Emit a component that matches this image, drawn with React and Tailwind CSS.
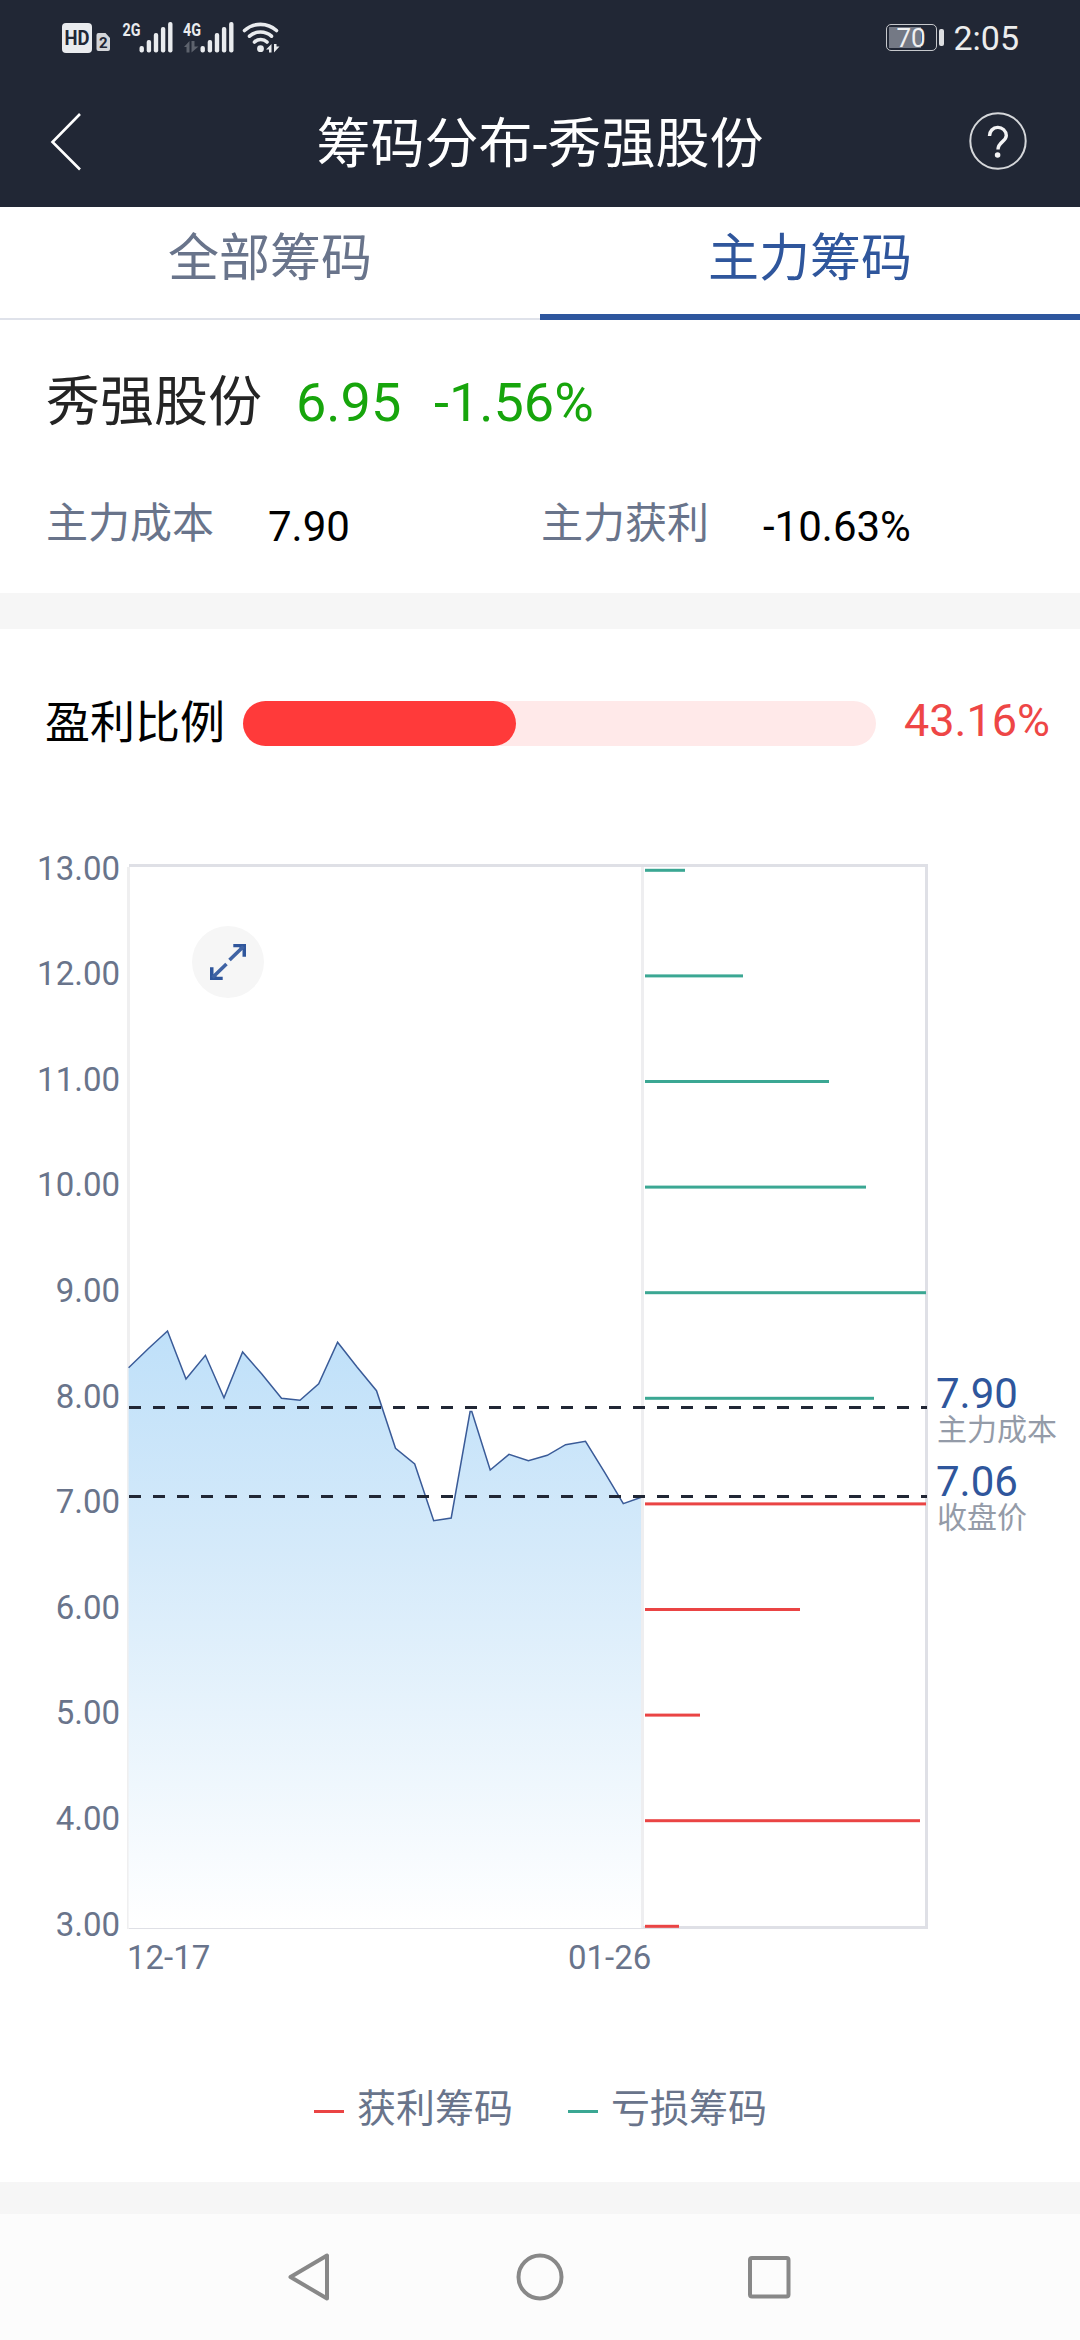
const LEVELS = [
  { label: "13.00", end: 685, gain: false },
  { label: "12.00", end: 743, gain: false },
  { label: "11.00", end: 829, gain: false },
  { label: "10.00", end: 866, gain: false },
  { label: "9.00", end: 926, gain: false },
  { label: "8.00", end: 874, gain: false },
  { label: "7.00", end: 926, gain: true },
  { label: "6.00", end: 800, gain: true },
  { label: "5.00", end: 700, gain: true },
  { label: "4.00", end: 920, gain: true },
  { label: "3.00", end: 679, gain: true },
];

const PRICE =
  "128.6,1367.7 148.2,1348.7 167.5,1331 186,1379 205.4,1355.3 224,1397.7 242.6,1352 261.8,1374 281.5,1398.3 300,1400.3 318.7,1383.7 337.6,1342.3 357,1367 376.5,1390.7 395.5,1448.3 414.7,1464 433.7,1520.7 451.2,1518 470.1,1411.5 471.8,1411.5 490.2,1470 509,1454.3 528.4,1460.7 547.3,1455.3 565.6,1444.7 585.5,1441.3 604.8,1472.7 623.3,1503.7 642,1497";

function Bars({ x }) {
  return (
    <g fill="#e9ebee">
      <rect x={x} y="46" width="4.4" height="6.4" rx="2" />
      <rect x={x + 7.2} y="40" width="4.4" height="12.4" rx="2" />
      <rect x={x + 14.3} y="33" width="4.4" height="19.4" rx="2" />
      <rect x={x + 21.4} y="27" width="4.4" height="25.4" rx="2" />
      <rect x={x + 28.6} y="22" width="4.4" height="30.4" rx="2" />
    </g>
  );
}

function StatusBar() {
  return (
    <div className="flex h-[75px] items-start justify-between">
      <svg width="300" height="75" viewBox="0 0 300 75" className="font-['Roboto',sans-serif]">
        <rect x="62" y="23" width="30" height="30" rx="4" fill="#e9ebee" />
        <text x="77" y="45" fontSize="20" fontWeight="700" textAnchor="middle" textLength="25" lengthAdjust="spacingAndGlyphs" fill="#212735">HD</text>
        <path d="M98.500 33h7l4.500 5v11a2 2 0 0 1-2 2h-9.500a2 2 0 0 1-2-2v-14a2 2 0 0 1 2-2z" fill="#d3d5d9" />
        <text x="103.200" y="48" fontSize="15" fontWeight="700" textAnchor="middle" fill="#212735">2</text>
        <text x="122.500" y="35.500" fontSize="18.500" fontWeight="700" textLength="18" lengthAdjust="spacingAndGlyphs" fill="#e9ebee">2G</text>
        <Bars x={139.5} />
        <text x="183" y="35.500" fontSize="18.500" fontWeight="700" textLength="18" lengthAdjust="spacingAndGlyphs" fill="#e9ebee">4G</text>
        <path d="M184 47l5.500-6v11.500h-3v-5.500zM191.500 52.500v-11.500h3v5.500h4z" fill="#5d626d" />
        <Bars x={200.5} />
        <g fill="none" stroke="#e9ebee" strokeWidth="3.600" strokeLinecap="round">
          <path d="M244.500 30.500a24 24 0 0 1 32 0" />
          <path d="M249.500 36.200a16.500 16.500 0 0 1 22 0" />
          <path d="M254.500 42a9 9 0 0 1 12.500 0" />
        </g>
        <circle cx="260.500" cy="48.700" r="3.400" fill="#e9ebee" />
        <path d="M266 49.500l5.500-5.500v8.500h-2.500v-3zM274 52.500v-8.500h2.500v2.500h3z" fill="#e9ebee" />
      </svg>
      <div className="flex h-[75px] items-center pr-[61px]">
        <div className="flex h-[27px] w-[51px] items-center rounded-[5px] border-[1.500px] border-[#c6c8cc] p-[2px]">
          <div className="flex h-[21px] w-[32px] items-center bg-[#747985] pl-[7px] font-['Roboto',sans-serif] text-[26px] leading-none text-[#eff0f2]">70</div>
        </div>
        <div className="ml-[2px] h-[17px] w-[5px] rounded-[2px] bg-[#dcdde0]" />
        <div className="ml-[9px] font-['Roboto',sans-serif] text-[34px] leading-none text-[#eceded]">2:05</div>
      </div>
    </div>
  );
}

function Header() {
  return (
    <div className="flex h-[132px] items-center justify-between">
      <svg width="160" height="132" viewBox="0 75 160 132">
        <path d="M80 114L52.500 142L80 169.500" fill="none" stroke="#fff" strokeWidth="2.600" />
      </svg>
      <h1 className="pt-[8px] text-[54px] leading-[60px] text-white">筹码分布-秀强股份</h1>
      <div className="flex w-[160px] justify-end pr-[53px]">
        <svg width="58" height="58" viewBox="0 0 58 58" className="mb-[1px]">
          <circle cx="29" cy="29" r="27.700" fill="none" stroke="#d5d7da" strokeWidth="2" />
          <path d="M20.500 24a8.300 8.300 0 0 1 16.800-.5c0 6-8.300 6.500-8.300 14" fill="none" stroke="#f4f4f5" strokeWidth="3.400" />
          <circle cx="28.600" cy="43" r="2.800" fill="#f4f4f5" />
        </svg>
      </div>
    </div>
  );
}

function Tabs() {
  return (
    <div className="grid h-[113px] grid-cols-2 text-center text-[51px] leading-[60px]">
      <div className="border-b-2 border-[#dfe2ea] pt-[22px] text-[#69748b]">全部筹码</div>
      <div className="border-b-[6px] border-[#2e569e] pt-[22px] text-[#2f569c]">主力筹码</div>
    </div>
  );
}

function Summary() {
  return (
    <div className="h-[273px] pl-[46px] pt-[53px]">
      <div className="flex h-[60px] items-baseline text-[54px] leading-[60px] text-[#17a50c]">
        <span className="w-[250px] text-[#242424]">秀强股份</span>
        <span className="w-[138px]">6.95</span>
        <span>-1.56%</span>
      </div>
      <div className="mt-[65px] flex h-[54px] items-center text-[42px] leading-[50px]">
        <span className="w-[222px] pb-[2px] text-[#69748b]">主力成本</span>
        <span className="w-[273px] pt-[4px] text-black">7.90</span>
        <span className="w-[222px] pb-[2px] text-[#69748b]">主力获利</span>
        <span className="pt-[4px] text-black">-10.63%</span>
      </div>
    </div>
  );
}

function ProfitRatio() {
  return (
    <div className="flex h-[189px] items-center pl-[45px] text-[45px] leading-[50px]">
      <span className="w-[198px] text-black">盈利比例</span>
      <div className="h-[45px] w-[633px] rounded-full bg-[#ffe9e9]">
        <div className="h-full w-[43.160%] rounded-full bg-[#ff3a3a]" />
      </div>
      <span className="pb-[5px] pl-[28px] text-[#ee4646]">43.16%</span>
    </div>
  );
}

function Chart() {
  return (
    <div className="flex h-[1182px]">
      <svg width="936" height="1182" viewBox="0 818 936 1182" className="block shrink-0 font-['Roboto',sans-serif]">
        <defs>
          <linearGradient id="area" x1="0" y1="1331" x2="0" y2="1928" gradientUnits="userSpaceOnUse">
            <stop offset="0" stopColor="#bfe0f9" />
            <stop offset="0.370" stopColor="#d5eafa" />
            <stop offset="1" stopColor="#ffffff" />
          </linearGradient>
        </defs>
        <rect x="127" y="867" width="3" height="1062" fill="#efeff0" />
        <polygon points={PRICE + " 642,1928 128.600,1928"} fill="url(#area)" />
        <rect x="641" y="867" width="3" height="1062" fill="#eeeef0" />
        <rect x="129" y="864" width="799" height="3" fill="#dfe0e6" />
        <rect x="925" y="864" width="3" height="1065" fill="#dfe0e6" />
        <rect x="129" y="1928" width="514" height="1" fill="#dfe0e6" />
        <rect x="643" y="1926" width="285" height="3" fill="#dfe0e6" />
        <polyline points={PRICE} fill="none" stroke="#3a5b98" strokeWidth="1.500" />
        {LEVELS.map((level, i) => (
          <g key={level.label}>
            <text x="120" y={879.7 + i * 105.58} fontSize="33" textAnchor="end" fill="#69748b">{level.label}</text>
            <rect x="645" y={868.8 + i * 105.6} width={level.end - 645} height="3" fill={level.gain ? "#ea4444" : "#3ba793"} />
          </g>
        ))}
        <path d="M129 1407.500H927M129 1496.500H927" stroke="#212735" strokeWidth="3" strokeDasharray="12 12" />
        <circle cx="228" cy="962" r="36" fill="#f6f6f6" />
        <g fill="#2f569c">
          <path d="M233.300 944H246V956.700H242.500V950L239 947.300H233.300z" />
          <path d="M222.700 980H210V967.300H213.500V974L217 976.700H222.700z" />
        </g>
        <path d="M243.500 946.500L229.500 960M212.500 977.500L226.500 964" stroke="#3f63a4" strokeWidth="3.600" />
        <g fontSize="33" fill="#69748b">
          <text x="127" y="1969">12-17</text>
          <text x="568" y="1969">01-26</text>
        </g>
      </svg>
      <div className="flex flex-col pt-[559px] text-[30px] leading-[34px] text-[#949ba8]">
        <span className="text-[42px] leading-[33px] text-[#2f569c]">7.90</span>
        <span className="mt-[3px] pl-px">主力成本</span>
        <span className="mt-[18px] text-[42px] leading-[33px] text-[#2f569c]">7.06</span>
        <span className="mt-[3px] pl-px">收盘价</span>
      </div>
    </div>
  );
}

function Legend() {
  return (
    <div className="flex h-[182px] items-start pl-[314px] pt-[84px] text-[39px] leading-[50px] text-[#69748b]">
      <div className="mt-[26px] h-[3px] w-[30px] bg-[#ea4444]" />
      <span className="w-[224px] pl-[13px]">获利筹码</span>
      <div className="mt-[26px] h-[3px] w-[30px] bg-[#3ba793]" />
      <span className="pl-[13px]">亏损筹码</span>
    </div>
  );
}

function NavBar() {
  return (
    <div className="flex h-[126px] items-center justify-center gap-[184px] bg-[#fcfcfc]">
      <svg width="46" height="52" viewBox="0 0 46 52" fill="none" stroke="#888" strokeWidth="4" strokeLinejoin="round">
        <path d="M41 4.500V47.500L4.500 26z" />
      </svg>
      <svg width="48" height="48" viewBox="0 0 48 48" fill="none" stroke="#888" strokeWidth="4">
        <circle cx="24" cy="24" r="21.500" />
      </svg>
      <svg width="46" height="48" viewBox="0 0 46 48" fill="none" stroke="#888" strokeWidth="4">
        <rect x="2" y="5" width="38.500" height="38.500" rx="2" />
      </svg>
    </div>
  );
}

export default function App() {
  return (
    <div className="h-[2340px] w-[1080px] overflow-hidden bg-white font-['Roboto','Noto_Sans_CJK_SC',sans-serif]">
      <div className="bg-[#212735]">
        <StatusBar />
        <Header />
      </div>
      <Tabs />
      <Summary />
      <div className="h-[36px] bg-[#f6f6f6]" />
      <ProfitRatio />
      <Chart />
      <Legend />
      <div className="h-[32px] bg-[#f6f6f6]" />
      <NavBar />
    </div>
  );
}
